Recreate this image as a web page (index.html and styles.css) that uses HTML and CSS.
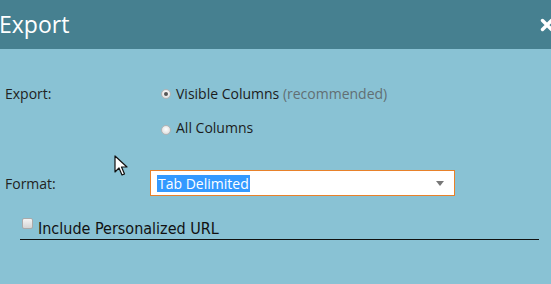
FILE: index.html
```
<!DOCTYPE html>
<html>
<head>
<meta charset="utf-8">
<link rel="stylesheet" href="styles.css">
</head>
<body>
<div class="dialog">
  <div class="header">
    <span class="title">Export</span>
    <svg class="close" width="14" height="14" viewBox="0 0 14 14" aria-label="close">
      <path d="M2.5 2.5 L11.5 11.5 M11.5 2.5 L2.5 11.5" stroke="#fff" stroke-width="3.4" stroke-linecap="round"/>
    </svg>
  </div>
  <div class="content">
    <div class="row row-export">
      <div class="label">Export:</div>
      <div class="options">
        <div class="option"><span class="radio checked"></span><span>Visible Columns <span class="muted">(recommended)</span></span></div>
        <div class="option"><span class="radio"></span><span>All Columns</span></div>
      </div>
    </div>
    <div class="row row-format">
      <div class="label">Format:</div>
      <div class="select">
        <span class="selected-text">Tab Delimited</span>
        <span class="arrow"></span>
      </div>
    </div>
    <div class="check-row">
      <span class="checkbox"></span><span class="check-label">Include Personalized URL</span>
    </div>
  </div>
  <svg class="cursor" width="14" height="22" viewBox="0 0 14 22">
    <path d="M1 1 L1 17 L5 13 L8 20 L10.5 19 L7.5 12 L13 12 Z" fill="#fff" stroke="#111" stroke-width="1.2" stroke-linejoin="round"/>
  </svg>
</div>
</body>
</html>
```
FILE: styles.css
```
html, body {
  margin: 0;
  padding: 0;
}
body {
  background: #89c2d4;
  font-family: "Open Sans", "Noto Sans", sans-serif;
  width: 551px;
  height: 284px;
  overflow: hidden;
}
.dialog {
  position: relative;
  height: 284px;
}
.header {
  height: 49px;
  background: #468090;
  display: flex;
  align-items: center;
  justify-content: space-between;
  color: #fff;
}
.title {
  font-size: 23px;
  margin-left: -1px;
  margin-top: -1px;
}
.close {
  margin-right: -3px;
  margin-top: 1px;
  flex: none;
}
.content {
  padding-top: 34px;
}
.row {
  display: grid;
  grid-template-columns: 160px 1fr;
}
.label {
  font-size: 14px;
  color: #222;
  padding-left: 5px;
}
.row-export .label {
  line-height: 22px;
}
.options {
  display: flex;
  flex-direction: column;
  gap: 12px;
  font-size: 14px;
  color: #1c1c1c;
}
.option {
  display: flex;
  align-items: center;
  gap: 5px;
  line-height: 22px;
}
.option:nth-child(2) .radio {
  margin-top: 4px;
}
.muted {
  color: #626f73;
}
.radio {
  width: 10px;
  height: 10px;
  border-radius: 50%;
  background: radial-gradient(circle at 50% 40%, #ffffff, #d6d6d6);
  border: 1px solid #b4b4b4;
  box-sizing: border-box;
  margin-left: 1px;
  position: relative;
}
.radio.checked::after {
  content: "";
  position: absolute;
  left: 2px;
  top: 2px;
  width: 4px;
  height: 4px;
  border-radius: 50%;
  background: #555;
}
.row-format {
  margin-top: 31px;
  grid-template-columns: 150px 305px;
  align-items: center;
}
.select {
  height: 26px;
  box-sizing: border-box;
  border: 1.5px solid #e8812a;
  background: #fff;
  display: flex;
  align-items: center;
  justify-content: space-between;
  padding: 0 10px 0 6px;
}
.selected-text {
  background: #3399ff;
  color: #fff;
  font-size: 14px;
  line-height: 17px;
  padding: 0 1px;
}
.arrow {
  width: 0;
  height: 0;
  border-left: 4.5px solid transparent;
  border-right: 4.5px solid transparent;
  border-top: 5px solid #777;
}
.check-row {
  margin: 19px 12px 0 20px;
  display: flex;
  align-items: center;
  border-bottom: 1.5px solid #111;
  padding-bottom: 0;
  padding-left: 2px;
}
.checkbox {
  width: 11px;
  height: 11px;
  box-sizing: border-box;
  border: 1px solid #aaa;
  border-radius: 2px;
  background: linear-gradient(#f4f4f4, #d4d4d4);
  margin-right: 5px;
  margin-top: -7px;
}
.check-label {
  font-family: "DejaVu Sans Condensed", "DejaVu Sans", sans-serif;
  font-size: 16px;
  color: #111;
  line-height: 21px;
  padding-top: 3px;
}
.cursor {
  position: absolute;
  left: 114px;
  top: 155px;
}
```
